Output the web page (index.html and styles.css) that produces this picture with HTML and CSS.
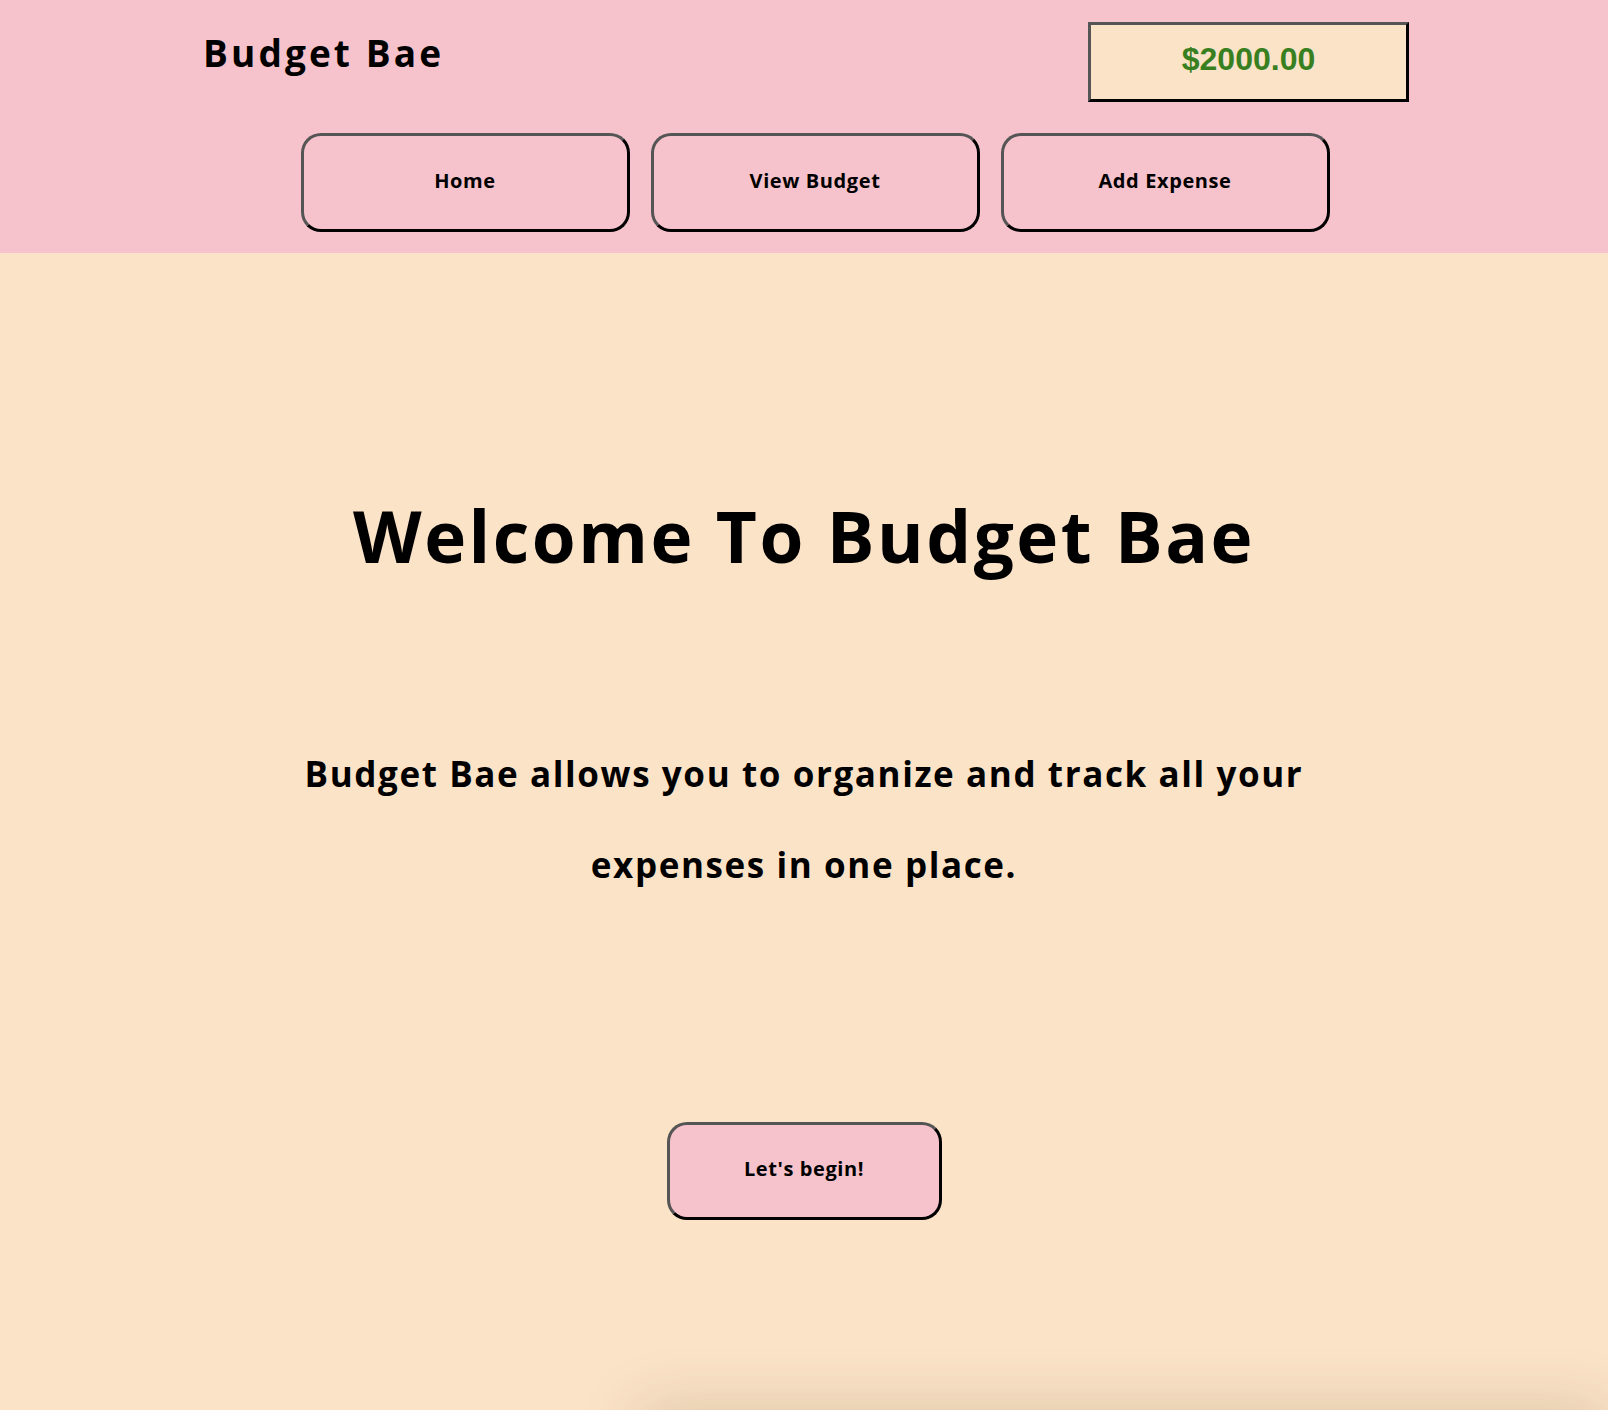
FILE: index.html
```html
<!DOCTYPE html>
<html lang="en">
<head>
<meta charset="utf-8">
<title>Budget Bae</title>
<link rel="stylesheet" href="styles.css">
</head>
<body>
<header class="site-header">
  <div class="top-row">
    <h1 class="brand">Budget Bae</h1>
    <div class="balance">$2000.00</div>
  </div>
  <nav class="nav">
    <button class="nav-btn">Home</button>
    <button class="nav-btn">View Budget</button>
    <button class="nav-btn">Add Expense</button>
  </nav>
</header>
<main class="hero">
  <h2 class="hero-title">Welcome To Budget Bae</h2>
  <p class="hero-text">Budget Bae allows you to organize and track all your expenses in one place.</p>
  <button class="begin-btn">Let's begin!</button>
</main>
<div class="below-card"></div>
</body>
</html>
```

FILE: styles.css
```css
html, body {
  margin: 0;
  padding: 0;
}

body {
  background: #fbe3c8;
  font-family: "Open Sans", "Noto Sans", sans-serif;
  color: #000;
  overflow: hidden;
}

.site-header {
  background: #f6c3cc;
  height: 253px;
  box-sizing: border-box;
  padding: 22px 199px 0 203px;
}

.top-row {
  display: flex;
  justify-content: space-between;
  align-items: flex-start;
}

.brand {
  margin: 12px 0 0 0;
  font-size: 37px;
  line-height: 1;
  font-weight: 700;
  letter-spacing: 3.1px;
}

.balance {
  box-sizing: border-box;
  width: 321px;
  height: 80px;
  padding-bottom: 5px;
  border: 3px solid;
  border-color: #555 #000 #000 #555;
  background: #fbe3c8;
  color: #38801f;
  font-family: "Liberation Sans", Arial, sans-serif;
  font-weight: 700;
  font-size: 32px;
  display: flex;
  align-items: center;
  justify-content: center;
}

.nav {
  display: flex;
  justify-content: center;
  gap: 21px;
  margin-top: 31px;
  padding-left: 18px;
}

.nav-btn,
.begin-btn {
  box-sizing: border-box;
  border: 3px solid;
  border-color: #555 #000 #000 #555;
  border-radius: 20px;
  background: #f6c3cc;
  font-family: "Open Sans", "Noto Sans", sans-serif;
  font-weight: 700;
  font-size: 20px;
  letter-spacing: 0.6px;
  color: #000;
  padding: 0 0 5px 0;
}

.nav-btn {
  width: 329px;
  height: 99px;
}

.hero {
  display: flex;
  flex-direction: column;
  align-items: center;
  padding-top: 247px;
}

.hero-title {
  margin: 0;
  font-size: 71px;
  line-height: 1;
  font-weight: 700;
  letter-spacing: 2.5px;
}

.hero-text {
  margin: 157px 0 0 0;
  max-width: 1030px;
  text-align: center;
  font-size: 35px;
  line-height: 91px;
  font-weight: 700;
  letter-spacing: 1.6px;
}

.begin-btn {
  margin-top: 212px;
  width: 275px;
  height: 98px;
}

.below-card {
  margin: 190px 0 0 640px;
  height: 200px;
  background: #fbe3c8;
  box-shadow: 0 0 60px rgba(80, 50, 10, 0.18);
}
```
